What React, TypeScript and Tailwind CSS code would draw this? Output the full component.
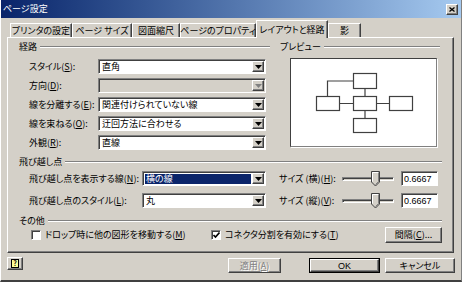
import React from 'react';

const raised =
  'border border-t-white border-l-white border-r-[#404040] border-b-[#404040] shadow-[inset_-1px_-1px_0_#808080]';
const sunken =
  'border border-t-[#808080] border-l-[#808080] border-r-white border-b-white shadow-[inset_1px_1px_0_#404040]';

const Acc = ({ k }: { k: string }) => (
  <>
    (<u>{k}</u>)
  </>
);

const Arrow = ({ disabled }: { disabled?: boolean }) => (
  <svg width="7" height="4" viewBox="0 0 7 4">
    <path d="M0 0h7L3.5 4z" fill={disabled ? '#808080' : '#000'} />
  </svg>
);

function Combo({
  value,
  className,
  disabled,
  selected,
}: {
  value?: string;
  className: string;
  disabled?: boolean;
  selected?: boolean;
}) {
  return (
    <div className={`flex h-[15px] p-[1px] ${sunken} ${disabled ? 'bg-[#d4d0c8]' : 'bg-white'} ${className}`}>
      <div className="flex flex-1 items-center pl-[1px] pr-[1px]">
        <span className={`block w-full pl-[1px] leading-[10px] ${selected ? 'bg-[#0a246a] text-white' : ''}`}>
          {value}
        </span>
      </div>
      <div className={`flex w-[12px] items-center justify-center bg-[#d4d0c8] ${raised}`}>
        <Arrow disabled={disabled} />
      </div>
    </div>
  );
}

function GroupHeader({ label }: { label: string }) {
  return (
    <div className="flex h-[12px] items-center">
      <span className="leading-[12px]">{label}</span>
      <div className="ml-[3px] h-[2px] flex-1 border-t border-t-[#808080] border-b border-b-white" />
    </div>
  );
}

function Slider() {
  return (
    <div className="relative flex h-[15px] w-[52px] items-center">
      <div className={`h-[4px] w-full ${sunken}`} />
      <svg className="absolute left-[29px] top-0" width="9" height="16" viewBox="0 0 9 16">
        <path d="M0.5 0.5h8v10.5l-4 4l-4-4z" fill="#d4d0c8" stroke="#404040" />
        <path d="M1.5 10.5V1.5h6" fill="none" stroke="#fff" />
        <path d="M7.5 1.5v9l-3 3" fill="none" stroke="#808080" />
      </svg>
    </div>
  );
}

function Edit({ value }: { value: string }) {
  return (
    <div className={`flex h-[15px] w-[37px] items-center bg-white pl-[2px] font-['Liberation_Sans',sans-serif] ${sunken}`}>
      {value}
    </div>
  );
}

function Check({ checked }: { checked?: boolean }) {
  return (
    <div className={`flex h-[10px] w-[10px] items-center justify-center bg-white ${sunken}`}>
      {checked && (
        <svg width="7" height="7" viewBox="0 0 7 7">
          <path d="M0.5 3l2 2l4-4.5" fill="none" stroke="#000" strokeWidth="1.6" />
        </svg>
      )}
    </div>
  );
}

const tabs = [
  { label: 'プリンタの設定', w: 'w-[62px]' },
  { label: 'ページ サイズ', w: 'w-[60px]' },
  { label: '図面縮尺', w: 'w-[48px]' },
  { label: 'ページのプロパティ', w: 'w-[76px]' },
  { label: 'レイアウトと経路', w: 'w-[72px]', active: true },
  { label: '影', w: 'w-[33px]' },
];

export default function App() {
  return (
    <div className="flex h-[282px] w-[462px] flex-col overflow-hidden border-b-2 border-l border-r border-b-[#404040] border-l-white border-r-[#808080] bg-[#d4d0c8] font-['Noto_Sans_CJK_JP','Noto_Sans',sans-serif] text-[9px] leading-[12px] text-black [font-feature-settings:'palt']">
      {/* title bar */}
      <div className="flex h-[18px] items-center justify-between bg-linear-to-r from-[#0a246a] to-[#a6caf0] pl-[2px] pr-[3px]">
        <span className="text-white">ページ設定</span>
        <div className={`flex h-[11px] w-[12px] items-center justify-center bg-[#d4d0c8] ${raised}`}>
          <svg width="6" height="5" viewBox="0 0 6 5">
            <path d="M0.5 0.5l5 4M5.5 0.5l-5 4" stroke="#000" strokeWidth="1.3" />
          </svg>
        </div>
      </div>

      {/* tabs */}
      <div className="relative z-10 flex h-[19px] items-end pl-[9px] whitespace-nowrap">
        {tabs.map((t) =>
          t.active ? (
            <div
              key={t.label}
              className={`-mb-px flex h-[18px] ${t.w} items-center justify-center border-l border-r border-t border-t-white border-l-white border-r-[#404040] bg-[#d4d0c8] shadow-[inset_-1px_0_0_#808080]`}
            >
              {t.label}
            </div>
          ) : (
            <div
              key={t.label}
              className={`flex h-[14px] ${t.w} items-center justify-center border-l border-r border-t border-t-white border-l-white border-r-[#404040] shadow-[inset_-1px_0_0_#808080]`}
            >
              {t.label}
            </div>
          )
        )}
      </div>

      {/* tab panel */}
      <div className={`ml-[6px] flex h-[216px] w-[447px] flex-col ${raised}`}>
        <div className="flex">
          {/* 経路 */}
          <div className="ml-[11px] mt-[3px] w-[251px]">
            <GroupHeader label="経路" />
            <div className="mt-[6px] flex flex-col gap-[4px] pl-[10px]">
              <div className="flex items-center">
                <span className="w-[69px]">スタイル<Acc k="S" />:</span>
                <Combo className="w-[168px]" value="直角" />
              </div>
              <div className="flex items-center">
                <span className="w-[69px]">方向<Acc k="D" />:</span>
                <Combo className="w-[168px]" disabled />
              </div>
              <div className="flex items-center">
                <span className="w-[69px] whitespace-nowrap">線を分離する<Acc k="E" />:</span>
                <Combo className="w-[168px]" value="関連付けられていない線" />
              </div>
              <div className="flex items-center">
                <span className="w-[69px] whitespace-nowrap">線を束ねる<Acc k="O" />:</span>
                <Combo className="w-[168px]" value="迂回方法に合わせる" />
              </div>
              <div className="flex items-center">
                <span className="w-[69px]">外観<Acc k="R" />:</span>
                <Combo className="w-[168px]" value="直線" />
              </div>
            </div>
          </div>

          {/* プレビュー */}
          <div className="ml-[10px] mt-[3px] w-[160px]">
            <GroupHeader label="プレビュー" />
            <div className="ml-[10px] mt-[5px] h-[89px] w-[147px] border border-t-[#404040] border-l-[#404040] border-r-[#808080] border-b-[#808080] bg-white shadow-[1px_1px_0_#fff]">
              <svg width="145" height="87" viewBox="0 0 145 87">
                <g fill="#fff" stroke="#404040" strokeWidth="1.2">
                  <rect x="62.5" y="14.5" width="23" height="15" />
                  <rect x="25.5" y="37.5" width="23" height="14" />
                  <rect x="62.5" y="37.5" width="23" height="14" />
                  <rect x="98.5" y="37.5" width="23" height="14" />
                  <rect x="62.5" y="59.5" width="23" height="14" />
                </g>
                <path
                  d="M74 29.5V37.5M48.5 44.5H62.5M85.5 44.5H98.5M74 51.5V59.5M62.5 22H36.5V37.5"
                  fill="none"
                  stroke="#404040"
                  strokeWidth="1.2"
                />
              </svg>
            </div>
          </div>
        </div>

        {/* 飛び越し点 */}
        <div className="ml-[11px] mr-[11px] mt-[6px]">
          <GroupHeader label="飛び越し点" />
          <div className="mt-[3px] flex flex-col gap-[7px] pl-[10px]">
            <div className="flex items-center">
              <span className="w-[113px] whitespace-nowrap">飛び越し点を表示する線<Acc k="N" />:</span>
              <Combo className="w-[124px]" value="横の線" selected />
              <span className="ml-[13px] w-[63px] whitespace-nowrap">サイズ (横)<Acc k="H" />:</span>
              <Slider />
              <div className="ml-[7px]">
                <Edit value="0.6667" />
              </div>
            </div>
            <div className="flex items-center">
              <span className="w-[113px] whitespace-nowrap">飛び越し点のスタイル<Acc k="L" />:</span>
              <Combo className="w-[124px]" value="丸" />
              <span className="ml-[13px] w-[63px] whitespace-nowrap">サイズ (縦)<Acc k="V" />:</span>
              <Slider />
              <div className="ml-[7px]">
                <Edit value="0.6667" />
              </div>
            </div>
          </div>
        </div>

        {/* その他 */}
        <div className="ml-[11px] mr-[11px] mt-[7px]">
          <GroupHeader label="その他" />
          <div className="flex h-[16px] items-center pl-[12px]">
            <div className="flex w-[180px] items-center gap-[4px]">
              <Check />
              <span className="whitespace-nowrap">ドロップ時に他の図形を移動する<Acc k="M" /></span>
            </div>
            <div className="flex flex-1 items-center gap-[4px]">
              <Check checked />
              <span className="whitespace-nowrap">コネクタ分割を有効にする<Acc k="T" /></span>
            </div>
            <div className={`flex h-[16px] w-[57px] items-center justify-center ${raised}`}>
              間隔<Acc k="C" />...
            </div>
          </div>
        </div>
      </div>

      {/* bottom buttons */}
      <div className="mt-[4px] flex items-start pl-[6px]">
        <div className={`flex h-[13px] w-[16px] items-center justify-center ${raised}`}>
          <span className="flex h-[9px] w-[8px] items-center justify-center border border-black bg-[#ffff99] text-[7px] font-bold leading-none">
            ?
          </span>
        </div>
        <div className="ml-auto mt-[1px] flex items-center">
          <div className={`flex h-[15px] w-[53px] items-center justify-center text-[#808080] [text-shadow:1px_1px_0_#fff] ${raised}`}>
            適用<Acc k="A" />
          </div>
          <div className="ml-[28px] flex h-[15px] w-[71px] items-center justify-center border border-black">
            <div className={`flex h-full w-full items-center justify-center font-['Liberation_Sans',sans-serif] ${raised}`}>
              OK
            </div>
          </div>
          <div className={`ml-[5px] mr-[6px] flex h-[15px] w-[70px] items-center justify-center ${raised}`}>
            キャンセル
          </div>
        </div>
      </div>
    </div>
  );
}
